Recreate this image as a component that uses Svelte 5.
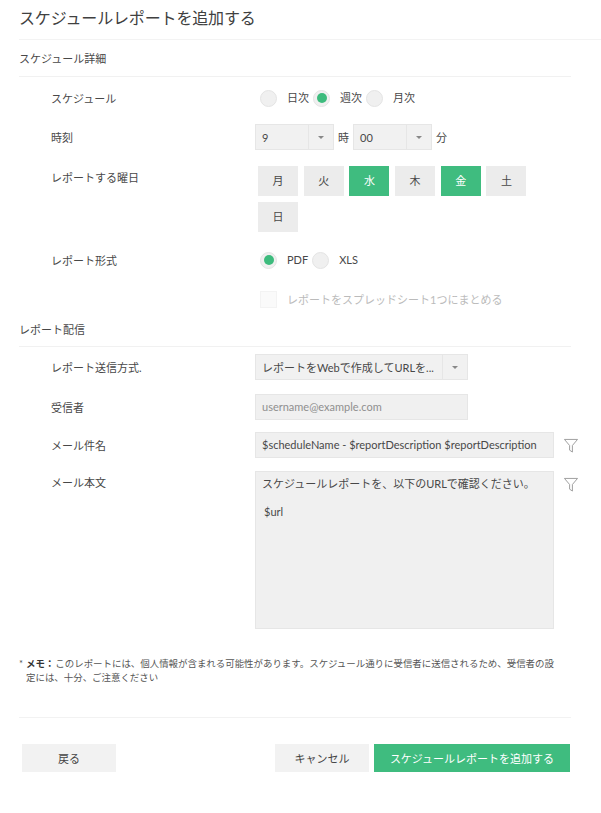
<script lang="ts">
    const days = [
        { name: "月", on: false },
        { name: "火", on: false },
        { name: "水", on: true },
        { name: "木", on: false },
        { name: "金", on: true },
        { name: "土", on: false },
        { name: "日", on: false },
    ];
    const freq = [
        { name: "日次", on: false },
        { name: "週次", on: true },
        { name: "月次", on: false },
    ];
    const formats = [
        { name: "PDF", on: true },
        { name: "XLS", on: false },
    ];
</script>

{#snippet radio(item)}
    <span class="radio-item">
        <span class="radio" class:on={item.on}></span>
        <span class="radio-label">{item.name}</span>
    </span>
{/snippet}

{#snippet arrow()}
    <span class="arrow"><i></i></span>
{/snippet}

{#snippet filter()}
    <svg class="filter" width="14" height="15" viewBox="0 0 15 15" fill="none" stroke="#999" stroke-width="1">
        <path d="M0.5 1H14.5L9 7.5V14.5L6 12.5V7.5Z" />
    </svg>
{/snippet}

<div class="page">
    <h1>スケジュールレポートを追加する</h1>

    <section>
        <h2>スケジュール詳細</h2>
        <div class="row r-freq">
            <div class="label">スケジュール</div>
            <div class="radios">
                {#each freq as f}
                    {@render radio(f)}
                {/each}
            </div>
        </div>
        <div class="row r-time">
            <div class="label">時刻</div>
            <div class="time">
                <div class="select hour"><span class="val">9</span>{@render arrow()}</div>
                <span class="unit">時</span>
                <div class="select minute"><span class="val">00</span>{@render arrow()}</div>
                <span class="unit">分</span>
            </div>
        </div>
        <div class="row r-days">
            <div class="label">レポートする曜日</div>
            <div class="days">
                {#each days as d}
                    <div class="day" class:on={d.on}>{d.name}</div>
                {/each}
            </div>
        </div>
        <div class="row r-format">
            <div class="label">レポート形式</div>
            <div class="radios">
                {#each formats as f}
                    {@render radio(f)}
                {/each}
            </div>
        </div>
        <div class="row r-check">
            <div class="label"></div>
            <div class="check">
                <span class="box"></span>
                <span>レポートをスプレッドシート1つにまとめる</span>
            </div>
        </div>
    </section>

    <section class="delivery">
        <h2>レポート配信</h2>
        <div class="row r-send">
            <div class="label">レポート送信方式.</div>
            <div class="select send"><span class="val">レポートをWebで作成してURLを...</span>{@render arrow()}</div>
        </div>
        <div class="row r-to">
            <div class="label">受信者</div>
            <div class="input placeholder">username@example.com</div>
        </div>
        <div class="row r-subject">
            <div class="label">メール件名</div>
            <div class="with-filter">
                <div class="input wide">$scheduleName - $reportDescription $reportDescription</div>
                {@render filter()}
            </div>
        </div>
        <div class="row r-body">
            <div class="label">メール本文</div>
            <div class="with-filter">
                <div class="input wide area">
                    <p>スケジュールレポートを、以下のURLで確認ください。</p>
                    <p class="url">$url</p>
                </div>
                {@render filter()}
            </div>
        </div>
    </section>

    <p class="memo">
        <span class="star">*</span>
        <span><b>メモ：</b>このレポートには、個人情報が含まれる可能性があります。スケジュール通りに受信者に送信されるため、受信者の設定には、十分、ご注意ください</span>
    </p>

    <footer>
        <button class="btn back">戻る</button>
        <button class="btn cancel">キャンセル</button>
        <button class="btn primary">スケジュールレポートを追加する</button>
    </footer>
</div>

<style>
    :global(body) {
        background: #fff;
    }

    .page {
        height: 813px;
        box-sizing: border-box;
        padding: 0 30px 0 19px;
        font-family: Lato, "Noto Sans CJK JP", sans-serif;
        font-size: 11px;
        color: #484848;
        overflow: hidden;
    }

    h1 {
        margin: 0 -30px 0 0;
        height: 39px;
        line-height: 36px;
        font-size: 16px;
        letter-spacing: -0.15px;
        font-weight: 400;
        color: #404040;
        border-bottom: 1px solid #f3f3f3;
    }

    h2 {
        margin: 0;
        height: 36px;
        line-height: 38px;
        font-size: 11px;
        font-weight: 400;
        border-bottom: 1px solid #f1f1f1;
    }

    .delivery h2 {
        height: 35px;
    }

    .row {
        display: grid;
        grid-template-columns: 204px 1fr;
        padding-left: 32px;
        align-items: center;
    }

    .r-freq {
        height: 40px;
        margin-top: 1px;
    }

    .r-time {
        height: 26px;
        margin-top: 6px;
    }

    .r-days {
        align-items: start;
        margin-top: 16px;
    }

    .r-days .label {
        padding-top: 3px;
    }

    .r-format {
        height: 28px;
        margin-top: 14px;
    }

    .r-check {
        height: 28px;
        margin-top: 11px;
        margin-bottom: -2px;
    }

    .r-send {
        margin-top: 7px;
    }

    .r-to {
        margin-top: 14px;
    }

    .r-subject {
        margin-top: 12px;
    }

    .r-body {
        margin-top: 13px;
        align-items: start;
    }

    .r-body .label {
        padding-top: 3px;
    }

    .radios {
        display: flex;
        padding-left: 5px;
        gap: 4px;
    }

    .radio-item {
        display: flex;
        align-items: center;
    }

    .radio {
        width: 15px;
        height: 15px;
        border-radius: 50%;
        background: #f0f0f0;
        border: 1px solid #e4e4e4;
        display: flex;
        align-items: center;
        justify-content: center;
    }

    .radio.on::after {
        content: "";
        width: 10px;
        height: 10px;
        border-radius: 50%;
        background: #3dbb7d;
    }

    .radio-label {
        margin-left: 10px;
        line-height: 18px;
    }

    .time {
        display: flex;
        align-items: center;
    }

    .unit {
        margin: 0 4px;
    }

    .select {
        display: flex;
        height: 26px;
        box-sizing: border-box;
        background: #f1f1f1;
        border: 1px solid #e6e6e6;
        align-items: center;
    }

    .val {
        flex: 1;
        padding-left: 6px;
        white-space: nowrap;
    }

    .arrow {
        width: 24px;
        height: 100%;
        border-left: 1px solid #e6e6e6;
        display: flex;
        align-items: center;
        justify-content: center;
    }

    .arrow i {
        border: 3px solid transparent;
        border-top-color: #888;
        border-bottom: 0;
    }

    .hour,
    .minute {
        width: 79px;
    }

    .send {
        width: 213px;
    }

    .days {
        display: grid;
        grid-template-columns: repeat(6, 40px);
        column-gap: 5.7px;
        row-gap: 6px;
        padding-left: 3px;
    }

    .day {
        height: 30px;
        line-height: 30px;
        text-align: center;
        background: #ececec;
    }

    .day.on {
        background: #3fbc7f;
        color: #fff;
    }

    .check {
        display: flex;
        align-items: center;
        padding-left: 5px;
        color: #bbb;
    }

    .box {
        width: 15px;
        height: 15px;
        background: #fafafa;
        border: 1px solid #f3f3f3;
        margin-right: 10px;
    }

    .input {
        box-sizing: border-box;
        background: #f0f0f0;
        border: 1px solid #e6e6e6;
        height: 26px;
        line-height: 24px;
        padding: 0 6px;
        width: 213px;
    }

    .placeholder {
        color: #8f8f8f;
    }

    .with-filter {
        display: flex;
        align-items: flex-start;
        gap: 10px;
    }

    .filter {
        margin-top: 6px;
        flex: none;
    }

    .wide {
        width: 299px;
        white-space: nowrap;
    }

    .area {
        height: 158px;
        padding-top: 1px;
        line-height: 22px;
    }

    .area p {
        margin: 0;
    }

    .area .url {
        margin-top: 6px;
        padding-left: 2px;
    }

    .memo {
        display: flex;
        margin: 28px 0 0;
        padding-right: 12px;
        font-size: 9.45px;
        line-height: 14px;
        color: #555;
        gap: 3px;
    }

    .memo b {
        color: #333;
        margin-right: 1px;
    }

    .star {
        flex: none;
    }

    footer {
        margin-top: 32px;
        border-top: 1px solid #f2f2f2;
        padding: 26px 1px 0 3px;
        display: flex;
    }

    .btn {
        height: 28px;
        border: 0;
        padding: 0;
        font: inherit;
        background: #f2f2f2;
        color: #444;
    }

    .back {
        width: 94px;
        margin-right: auto;
    }

    .cancel {
        width: 94px;
        margin-right: 5px;
    }

    .primary {
        width: 196px;
        background: #3fbc7f;
        color: #fff;
    }
</style>
